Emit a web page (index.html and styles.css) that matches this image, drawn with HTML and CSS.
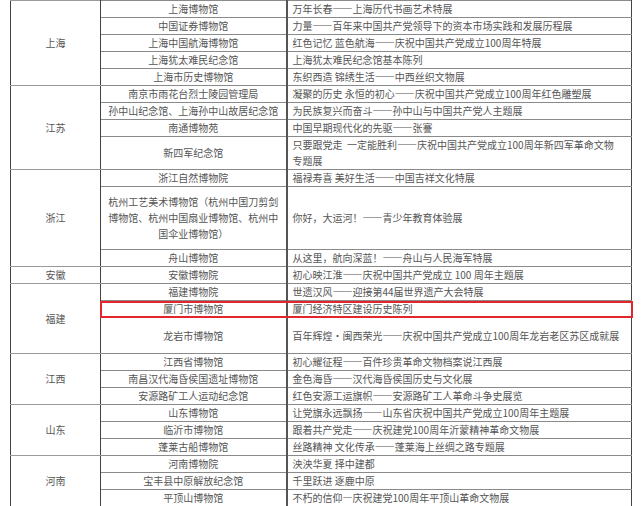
FILE: index.html
```html
<!DOCTYPE html>
<html lang="zh-CN">
<head>
<meta charset="utf-8">
<title>展览列表</title>
<link rel="stylesheet" href="styles.css">
</head>
<body>
<table class="list">
  <colgroup><col class="c1"><col class="c2"><col class="c3"></colgroup>
  <tbody>
    <tr><td class="prov" rowspan="5">上海</td><td class="mus">上海博物馆</td><td class="exh">万年长春——上海历代书画艺术特展</td></tr>
    <tr><td class="mus">中国证券博物馆</td><td class="exh">力量——百年来中国共产党领导下的资本市场实践和发展历程展</td></tr>
    <tr><td class="mus">上海中国航海博物馆</td><td class="exh">红色记忆 蓝色航海——庆祝中国共产党成立100周年特展</td></tr>
    <tr><td class="mus">上海犹太难民纪念馆</td><td class="exh">上海犹太难民纪念馆基本陈列</td></tr>
    <tr><td class="mus">上海市历史博物馆</td><td class="exh">东织西造 锦绣生活——中西丝织文物展</td></tr>

    <tr><td class="prov" rowspan="4">江苏</td><td class="mus">南京市雨花台烈士陵园管理局</td><td class="exh">凝聚的历史 永恒的初心——庆祝中国共产党成立100周年红色雕塑展</td></tr>
    <tr><td class="mus">孙中山纪念馆、上海孙中山故居纪念馆</td><td class="exh">为民族复兴而奋斗——孙中山与中国共产党人主题展</td></tr>
    <tr><td class="mus">南通博物苑</td><td class="exh">中国早期现代化的先驱——张謇</td></tr>
    <tr><td class="mus">新四军纪念馆</td><td class="exh">只要跟党走&nbsp; 一定能胜利——庆祝中国共产党成立100周年新四军革命文物<br>专题展</td></tr>

    <tr><td class="prov" rowspan="3">浙江</td><td class="mus">浙江自然博物院</td><td class="exh">福禄寿喜 美好生活——中国吉祥文化特展</td></tr>
    <tr class="tall3"><td class="mus">杭州工艺美术博物馆（杭州中国刀剪剑博物馆、杭州中国扇业博物馆、杭州中国伞业博物馆）</td><td class="exh">你好，大运河！——青少年教育体验展</td></tr>
    <tr><td class="mus">舟山博物馆</td><td class="exh">从这里，航向深蓝！——舟山与人民海军特展</td></tr>

    <tr><td class="prov">安徽</td><td class="mus">安徽博物院</td><td class="exh">初心映江淮——庆祝中国共产党成立 100 周年主题展</td></tr>

    <tr><td class="prov" rowspan="3">福建</td><td class="mus">福建博物院</td><td class="exh">世遗汉风——迎接第44届世界遗产大会特展</td></tr>
    <tr><td class="mus mark"><span class="box"></span>厦门市博物馆</td><td class="exh">厦门经济特区建设历史陈列</td></tr>
    <tr class="tall1"><td class="mus">龙岩市博物馆</td><td class="exh">百年辉煌·闽西荣光——庆祝中国共产党成立100周年龙岩老区苏区成就展</td></tr>

    <tr><td class="prov" rowspan="3">江西</td><td class="mus">江西省博物馆</td><td class="exh">初心耀征程——百件珍贵革命文物档案说江西展</td></tr>
    <tr><td class="mus">南昌汉代海昏侯国遗址博物馆</td><td class="exh">金色海昏——汉代海昏侯国历史与文化展</td></tr>
    <tr><td class="mus">安源路矿工人运动纪念馆</td><td class="exh">红色安源工运旗帜——安源路矿工人革命斗争史展览</td></tr>

    <tr><td class="prov" rowspan="3">山东</td><td class="mus">山东博物馆</td><td class="exh">让党旗永远飘扬——山东省庆祝中国共产党成立100周年主题展</td></tr>
    <tr><td class="mus">临沂市博物馆</td><td class="exh">跟着共产党走——庆祝建党100周年沂蒙精神革命文物展</td></tr>
    <tr><td class="mus">蓬莱古船博物馆</td><td class="exh">丝路精神 文化传承——蓬莱海上丝绸之路专题展</td></tr>

    <tr><td class="prov" rowspan="3">河南</td><td class="mus">河南博物院</td><td class="exh">泱泱华夏 择中建都</td></tr>
    <tr><td class="mus">宝丰县中原解放纪念馆</td><td class="exh">千里跃进 逐鹿中原</td></tr>
    <tr><td class="mus">平顶山博物馆</td><td class="exh">不朽的信仰—庆祝建党100周年平顶山革命文物展</td></tr>
  </tbody>
</table>
</body>
</html>
```

FILE: styles.css
```css
html, body {
  background: #ffffff;
}
body {
  margin: 0 0 0 10px;
  font-family: "Noto Sans CJK SC", "Liberation Sans", sans-serif;
  font-size: 10px;
  color: #555555;
}
.list {
  border-collapse: collapse;
  table-layout: fixed;
  width: 621px;
}
.c1 { width: 90px; }
.c2 { width: 186px; }
.c3 { width: 345px; }
.list td {
  padding: 0 5px;
  line-height: 16px;
  border-top: 1px solid #8a8a8a;
  border-bottom: 1px solid #8a8a8a;
  border-left: 1px solid #444444;
  border-right: 1px solid #444444;
  vertical-align: middle;
  white-space: normal;
}
.list td.prov {
  text-align: center;
  border-top-color: #9a9a9a;
  border-bottom-color: #9a9a9a;
}
.list td.mus {
  text-align: center;
}
.list td.exh {
  text-align: left;
  border-left: 2px solid #555555;
  padding-right: 2px;
}
.tall3 td {
  padding-top: 7px;
  padding-bottom: 7px;
}
.tall1 td {
  height: 35px;
  padding-top: 0;
  padding-bottom: 0;
}
.mark {
  position: relative;
}
.box {
  position: absolute;
  left: -1px;
  top: 0;
  width: 529px;
  height: 13px;
  border: 2px solid #e3262b;
  pointer-events: none;
}
```
